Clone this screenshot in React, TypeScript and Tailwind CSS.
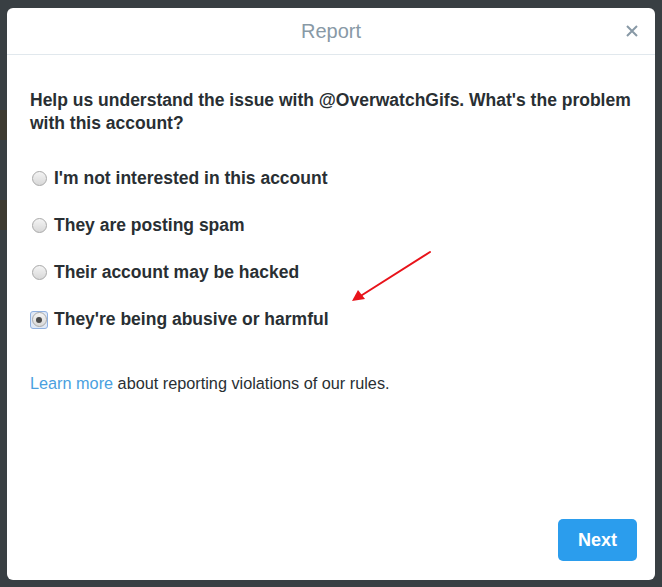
import React from 'react';

const options = [
    "I'm not interested in this account",
    'They are posting spam',
    'Their account may be hacked',
    "They're being abusive or harmful",
];

function Radio({ checked }: { checked: boolean }) {
    const circle = (
        <span className="flex h-[15px] w-[15px] items-center justify-center rounded-full border border-[#a9a9a9] bg-gradient-to-b from-[#f4f4f4] to-[#d8d8d8]">
            {checked && <span className="h-[6px] w-[6px] rounded-full bg-[#4a4a4a]" />}
        </span>
    );
    if (!checked) return <span className="flex h-[18px] w-[18px] items-center justify-center">{circle}</span>;
    return (
        <span className="flex h-[18px] w-[18px] items-center justify-center rounded-[3px] border border-[#8fb0e0] bg-[#dfe8f6]">
            {circle}
        </span>
    );
}

export default function App() {
    return (
        <div
            className="relative flex h-[587px] w-[662px] bg-[#393f43]"
            style={{ fontFamily: '"Liberation Sans", Arial, sans-serif' }}
        >
            {/* Page behind the overlay */}
            <div className="flex w-[7px] flex-col pt-[110px]">
                <div className="h-[30px] bg-[#3d3a31]" />
                <div className="h-[60px]" />
                <div className="h-[30px] bg-[#3d3a31]" />
            </div>

            {/* Modal */}
            <div className="mt-[8px] flex h-[572px] w-[648px] flex-col overflow-hidden rounded-[6px] bg-white">
                <div className="relative flex h-[47px] shrink-0 items-center justify-center border-b border-[#e1e8ed]">
                    <span className="text-[20px] text-[#8899a6]">Report</span>
                    <span className="absolute right-[17px] top-[17px] text-[#8899a6]">
                        <svg width="12" height="12" viewBox="0 0 12 12">
                            <path d="M1 1L11 11M11 1L1 11" stroke="currentColor" strokeWidth="2" />
                        </svg>
                    </span>
                </div>

                <div className="flex flex-1 flex-col pl-[23px] pr-[12px] pt-[34px]">
                    <p className="text-[17.5px] font-bold leading-[23px] text-[#292f33]">
                        Help us understand the issue with @OverwatchGifs. What's the problem with this account?
                    </p>

                    <div className="mt-[20px] flex flex-col">
                        {options.map((label, i) => (
                            <label key={label} className="flex h-[47px] items-center gap-[6px]">
                                <Radio checked={i === 3} />
                                <span className="text-[17.5px] font-bold text-[#292f33]">{label}</span>
                            </label>
                        ))}
                    </div>

                    <p className="mt-[29px] text-[16.25px] leading-[22px] text-[#292f33]">
                        <span className="text-[#4a9fe0]">Learn more</span> about reporting violations of our rules.
                    </p>
                </div>

                <div className="flex justify-end pb-[19px] pr-[18px]">
                    <button className="h-[42px] w-[79px] rounded-[5px] bg-[#2b9ded] text-[18px] font-bold text-white">
                        Next
                    </button>
                </div>
            </div>

            {/* Annotation arrow */}
            <svg className="absolute left-[340px] top-[245px]" width="100" height="65" viewBox="0 0 100 65">
                <path d="M90 7L19 52" stroke="#e8131a" strokeWidth="2" strokeLinecap="round" />
                <path d="M12 56L18 45L25 54Z" fill="#e8131a" />
            </svg>
        </div>
    );
}
